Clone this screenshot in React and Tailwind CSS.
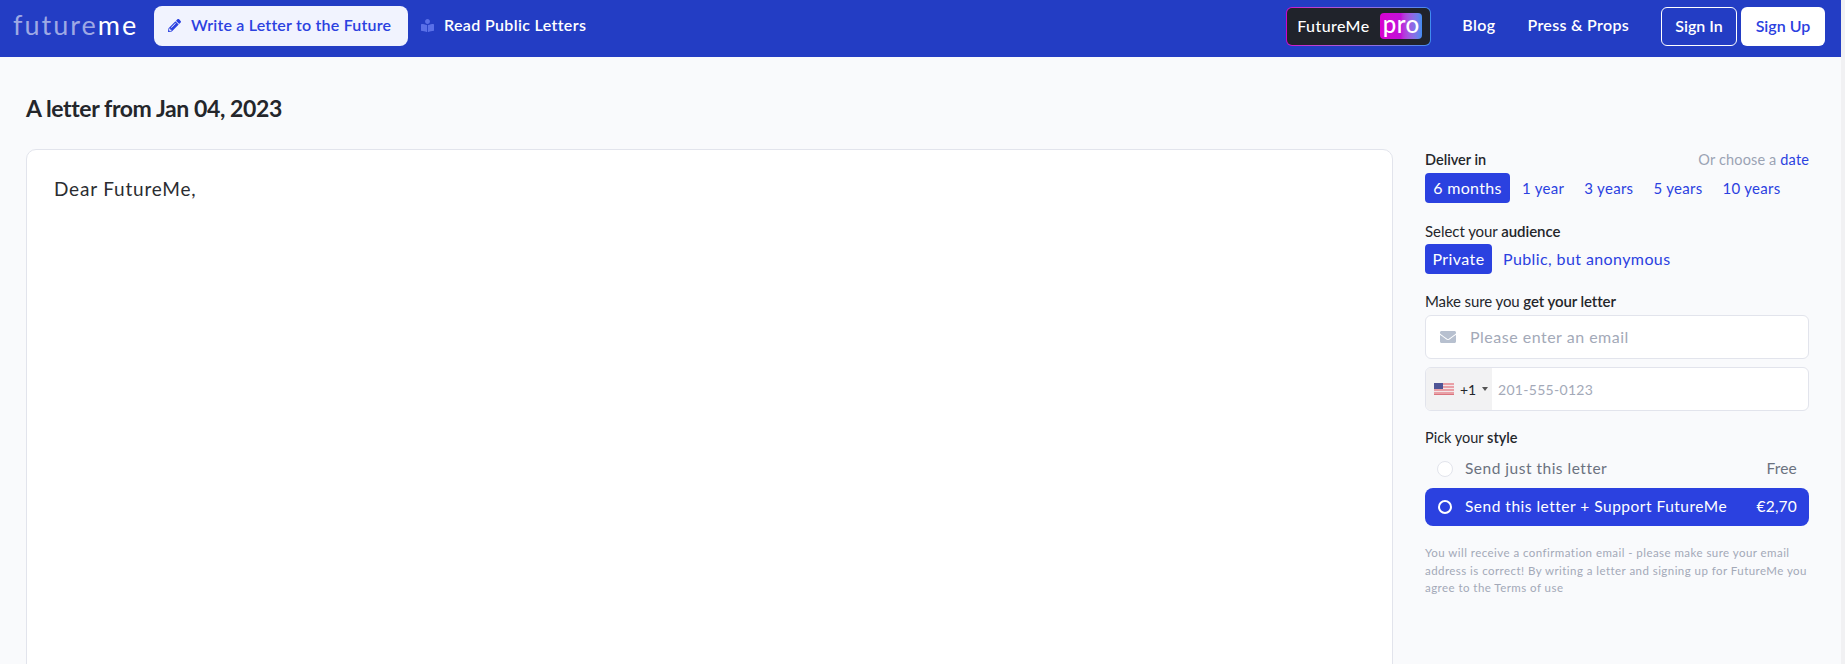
import { FaPencilAlt, FaBookReader, FaEnvelope } from "react-icons/fa";

const periods = ["1 year", "3 years", "5 years", "10 years"];

function UsFlag() {
  return (
    <svg width="20" height="12" viewBox="0 0 20 12" className="shrink-0">
      <rect width="20" height="12" fill="#e9a0a6" />
      <rect y="2" width="20" height="1" fill="#f3e6e8" />
      <rect y="5" width="20" height="1" fill="#f3e6e8" />
      <rect y="8" width="20" height="1" fill="#f3e6e8" />
      <rect y="11" width="20" height="1" fill="#d9757f" />
      <rect width="9" height="6" fill="#4f5596" />
    </svg>
  );
}

export default function App() {
  return (
    <div className="h-screen overflow-hidden flex bg-[#f9fafc] font-['Lato',sans-serif] text-[#24262b]">
      <div className="flex-1 min-w-0">
        {/* Top nav */}
        <header className="h-[57px] bg-[#233dc4] flex items-start pt-[6px] pl-[13px] pr-[16px]">
          <div className="h-[40px] flex items-center w-[141px] text-[27px] leading-none tracking-[2px] text-[#9ea9e4] pb-[3px]">
            future<span className="text-white">me</span>
          </div>
          <a className="h-[40px] w-[254px] rounded-lg bg-[#f1f3fe] text-[#2b41e0] flex items-center pl-[14px] pb-[2px] gap-[10px] text-[16px] font-semibold tracking-[0.2px]">
            <FaPencilAlt className="text-[13px]" />
            Write a Letter to the Future
          </a>
          <a className="ml-[13px] h-[40px] pb-[2px] flex items-center gap-[10px] text-white text-[16px] font-semibold tracking-[0.35px]">
            <FaBookReader className="text-[13px] text-[#5a70e8]" />
            Read Public Letters
          </a>

          <div className="ml-auto mt-px h-[39px] w-[145px] rounded-md p-px bg-gradient-to-r from-[#d000c8] to-[#3f8cf0]">
            <div className="h-full rounded-[5px] bg-[#20232b] flex items-center justify-between pl-[10px] pr-[8px] pb-[2px] text-white text-[16px] font-medium tracking-[0.4px]">
              FutureMe
              <span className="h-[26px] w-[42px] rounded-sm bg-gradient-to-r from-[#d800d0] via-[#c010d8] to-[#3f8cf0] flex items-center justify-center text-[24px] leading-none pb-1 tracking-[0.5px]">
                pro
              </span>
            </div>
          </div>
          <a className="ml-[31px] h-[40px] pb-[2px] flex items-center text-white text-[16px] font-semibold tracking-[0.4px]">Blog</a>
          <a className="ml-[32px] h-[40px] pb-[2px] flex items-center text-white text-[16px] font-semibold tracking-[0.3px]">Press &amp; Props</a>
          <a className="ml-[32px] mt-px h-[39px] w-[76px] rounded-md border border-white pb-[2px] text-white text-[16px] font-semibold flex items-center justify-center">
            Sign In
          </a>
          <a className="ml-[4px] mt-px h-[39px] w-[84px] rounded-md bg-white pb-[2px] text-[#2b41e0] text-[16px] font-semibold flex items-center justify-center">
            Sign Up
          </a>
        </header>

        <main className="pl-[26px] pr-[32px]">
          <h1 className="pt-[37px] text-[23px] leading-[28px] font-bold tracking-[-0.4px]">
            A letter from Jan 04, 2023
          </h1>

          <div className="mt-[27px] flex gap-[32px]">
            {/* Letter body */}
            <div className="flex-1 h-[600px] rounded-[10px] border border-[#e2e4ec] bg-white px-[27px] py-[25px] text-[19px] leading-[28px] text-[#2b2d31] tracking-[0.8px]">
              Dear FutureMe,
            </div>

            {/* Sidebar */}
            <aside className="w-[384px] shrink-0 pt-px">
              <div className="flex justify-between text-[14.5px] leading-[20px]">
                <span className="font-semibold">Deliver in</span>
                <span className="text-[#9ba3b4] tracking-[0.15px]">
                  Or choose a <span className="text-[#2b41e0]">date</span>
                </span>
              </div>
              <div className="mt-[3px] flex items-center gap-[12px] text-[15px]">
                <span className="h-[30px] w-[85px] justify-center rounded bg-[#2b41e0] text-white text-[16px] flex items-center tracking-[0.3px]">
                  6 months
                </span>
                {periods.map((p) => (
                  <span key={p} className="pr-[8px] text-[#2b41e0] tracking-[0.3px]">
                    {p}
                  </span>
                ))}
              </div>

              <p className="mt-[18px] text-[15px] leading-[20px] tracking-[-0.05px]">
                Select your <span className="font-semibold">audience</span>
              </p>
              <div className="mt-[3px] flex items-center gap-[11px] text-[16px] tracking-[0.4px]">
                <span className="h-[30px] w-[67px] justify-center rounded bg-[#2b41e0] text-white flex items-center">Private</span>
                <span className="text-[#2b41e0]">Public, but anonymous</span>
              </div>

              <p className="mt-[17px] text-[15px] leading-[20px] tracking-[-0.1px]">
                Make sure you <span className="font-semibold">get your letter</span>
              </p>
              <div className="mt-[4px] h-[44px] rounded-md border border-[#e2e4ec] bg-white flex items-center pl-[14px] gap-[14px] text-[16px] text-[#a3a9b8] tracking-[0.5px]">
                <FaEnvelope className="text-[16px] text-[#b7c0cf]" />
                Please enter an email
              </div>
              <div className="mt-[8px] h-[44px] rounded-md border border-[#e2e4ec] bg-white flex items-center overflow-hidden text-[14px]">
                <div className="h-full w-[66px] bg-[#f2f2f3] flex items-center pl-[8px] gap-[6px] text-[#24262b]">
                  <UsFlag />
                  +1
                  <span className="border-x-[3px] border-t-[4px] border-x-transparent border-t-[#555]" />
                </div>
                <span className="pl-[6px] text-[#a3a9b8] tracking-[0.3px]">201-555-0123</span>
              </div>

              <p className="mt-[17px] text-[14.5px] leading-[20px]">
                Pick your <span className="font-semibold">style</span>
              </p>
              <div className="mt-[2px] h-[38px] flex items-center pl-[12px] pr-[12px] text-[15.5px] text-[#6b7280] tracking-[0.5px]">
                <span className="h-[16px] w-[16px] rounded-full border border-[#e2e4ec] bg-white mr-[12px]" />
                Send just this letter
                <span className="ml-auto tracking-[0.2px]">Free</span>
              </div>
              <div className="h-[38px] rounded-lg bg-[#2b41e0] flex items-center pl-[13px] pr-[12px] text-[15.5px] text-white tracking-[0.5px]">
                <span className="h-[14px] w-[14px] rounded-full border-2 border-white mr-[13px]" />
                Send this letter + Support FutureMe
                <span className="ml-auto tracking-[0.2px]">€2,70</span>
              </div>

              <p className="mt-[18px] text-[11.5px] leading-[17.5px] text-[#a3a9b8] tracking-[0.45px]">
                You will receive a confirmation email - please make sure your email address is correct! By writing a letter and signing up for FutureMe you agree to the Terms of use
              </p>
            </aside>
          </div>
        </main>
      </div>
      {/* scrollbar track at the window edge */}
      <div className="w-[4px] shrink-0 bg-[#f1f1f3]" />
    </div>
  );
}
